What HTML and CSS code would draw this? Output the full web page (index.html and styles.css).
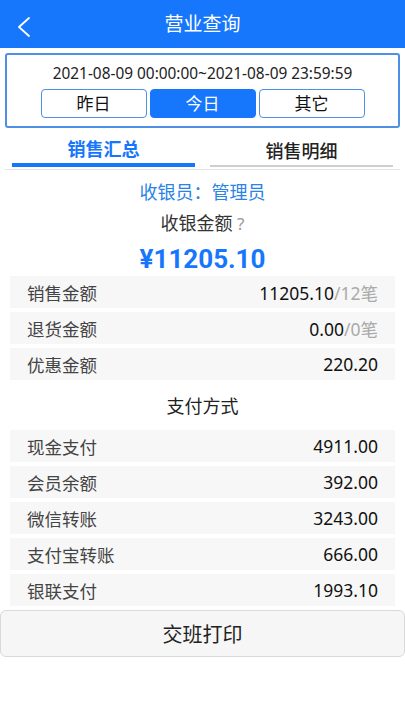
FILE: index.html
```html
<!DOCTYPE html>
<html lang="zh-CN">
<head>
<meta charset="utf-8">
<title>营业查询</title>
<link rel="stylesheet" href="styles.css">
</head>
<body>
<div class="page">
  <header class="topbar">
    <svg class="back" width="14" height="20" viewBox="0 0 14 20"><polyline points="12,1 2,10 12,19" fill="none" stroke="#fff" stroke-width="1.8" stroke-linecap="round" stroke-linejoin="round"/></svg>
    <h1 class="title">营业查询</h1>
  </header>

  <section class="datebox">
    <div class="range">2021-08-09 00:00:00~2021-08-09 23:59:59</div>
    <div class="btns">
      <button class="dbtn">昨日</button>
      <button class="dbtn active">今日</button>
      <button class="dbtn">其它</button>
    </div>
  </section>

  <nav class="tabs">
    <div class="tab on">销售汇总</div>
    <div class="tab">销售明细</div>
  </nav>

  <section class="summary">
    <div class="cashier">收银员：管理员</div>
    <div class="label">收银金额<span class="q"> ?</span></div>
    <div class="amount">¥11205.10</div>
  </section>

  <div class="rows">
    <div class="row"><span class="k">销售金额</span><span class="v">11205.10<span class="dim">/12笔</span></span></div>
    <div class="row"><span class="k">退货金额</span><span class="v">0.00<span class="dim">/0笔</span></span></div>
    <div class="row"><span class="k">优惠金额</span><span class="v">220.20</span></div>
  </div>

  <div class="subhead">支付方式</div>

  <div class="rows pay">
    <div class="row"><span class="k">现金支付</span><span class="v">4911.00</span></div>
    <div class="row"><span class="k">会员余额</span><span class="v">392.00</span></div>
    <div class="row"><span class="k">微信转账</span><span class="v">3243.00</span></div>
    <div class="row"><span class="k">支付宝转账</span><span class="v">666.00</span></div>
    <div class="row"><span class="k">银联支付</span><span class="v">1993.10</span></div>
  </div>

  <button class="print">交班打印</button>
</div>
</body>
</html>
```

FILE: styles.css
```css
* { box-sizing: border-box; }
html, body { margin: 0; padding: 0; background: #fff; }
body {
  font-family: "Noto Sans", "Noto Sans CJK SC", sans-serif;
  color: #222;
  width: 405px;
}
.topbar {
  height: 48px;
  background: #1677fd;
  display: flex;
  align-items: center;
  justify-content: center;
  position: relative;
}
.back { position: absolute; left: 17px; top: 17px; }
.title {
  margin: 0;
  font-size: 19px;
  font-weight: normal;
  color: #fff;
  line-height: 24px;
}
.datebox {
  margin: 5px 5px 0;
  height: 75px;
  border: 2px solid #4e90e6;
  border-radius: 3px;
  padding-top: 9px;
}
.range {
  text-align: center;
  font-size: 15.4px;
  line-height: 20px;
  color: #222;
}
.btns {
  margin-top: 5px;
  display: flex;
  justify-content: center;
  gap: 3px;
}
.dbtn {
  width: 106px;
  height: 29px;
  border: 1px solid #4e90e6;
  border-radius: 4px;
  background: #fff;
  font-family: inherit;
  font-size: 17px;
  color: #111;
  padding: 0;
  line-height: 27px;
}
.dbtn.active { background: #1677fd; border-color: #1677fd; color: #fff; }
.tabs {
  margin: 0 5px;
  padding: 7px 7px 2px;
  display: flex;
  gap: 15px;
  border-bottom: 1px solid #e4e4e4;
  align-items: flex-end;
}
.tab {
  flex: 1;
  text-align: center;
  font-size: 18px;
  line-height: 28px;
  color: #222;
  border-bottom: 2px solid #cfcfcf;
  padding-top: 2px;
  font-weight: 500;
}
.tab.on {
  color: #1677fd;
  font-weight: bold;
  border-bottom: 4px solid #1677fd;
  padding-top: 0;
}
.summary { text-align: center; padding-top: 11px; }
.cashier { font-size: 18px; line-height: 22px; color: #2a83e6; }
.label { margin-top: 9px; font-size: 18px; line-height: 22px; color: #333; }
.q { color: #999; font-size: 17px; }
.amount {
  margin-top: 7px;
  font-size: 26px;
  line-height: 34px;
  font-weight: bold;
  color: #1677fd;
  font-family: "Roboto", "Noto Sans", sans-serif;
}
.rows {
  margin: 0 10px;
  display: flex;
  flex-direction: column;
  gap: 4px;
}
.row {
  height: 32px;
  background: #f7f7f7;
  display: flex;
  align-items: center;
  justify-content: space-between;
  padding: 0 17px;
  font-size: 17.5px;
}
.k { color: #444; }
.v { color: #111; }
.dim { color: #aaa; }
.subhead {
  margin-top: 15px;
  text-align: center;
  font-size: 18px;
  line-height: 22px;
  color: #222;
}
.rows.pay { margin-top: 13px; }
.print {
  display: block;
  margin-top: 4px;
  width: 405px;
  height: 47px;
  background: #f6f6f6;
  border: 1px solid #d9d9d9;
  border-radius: 6px;
  font-family: inherit;
  font-size: 20px;
  color: #222;
  padding: 0;
}
```
